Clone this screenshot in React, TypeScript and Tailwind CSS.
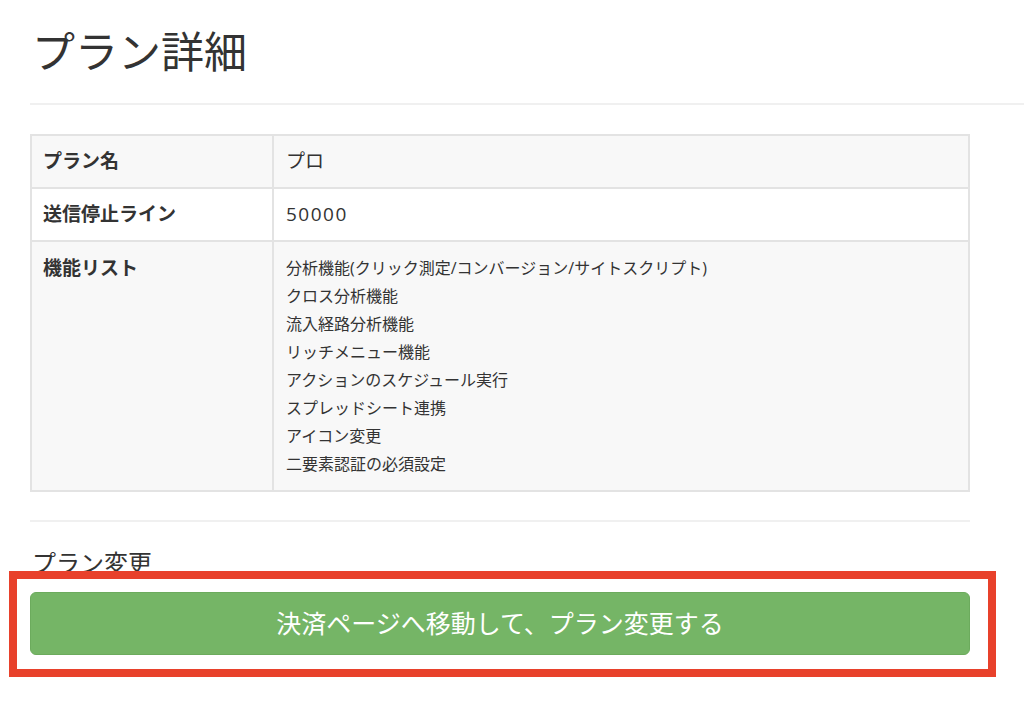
import React from 'react'

const features = [
  '分析機能(クリック測定/コンバージョン/サイトスクリプト)',
  'クロス分析機能',
  '流入経路分析機能',
  'リッチメニュー機能',
  'アクションのスケジュール実行',
  'スプレッドシート連携',
  'アイコン変更',
  '二要素認証の必須設定',
]

export default function App() {
  return (
    <div className="min-h-[712px] bg-white pl-[30px] text-[#333] font-['Open_Sans','Noto_Sans_CJK_JP',sans-serif]">
      {/* Header */}
      <div className="border-b-2 border-[#f0f0f0] pt-[24px] pb-[23px]">
        <h1 className="pl-[2px] text-[43px] leading-[56px] font-normal">プラン詳細</h1>
      </div>

      <div className="w-[940px]">
        {/* Plan table */}
        <div className="mt-[29px] border-2 border-[#e3e3e3]">
          <div className="flex bg-[#f8f8f8]">
            <div className="w-[242px] h-[51px] flex items-center px-[11px] text-[19px] font-bold border-r-2 border-[#e3e3e3]">
              プラン名
            </div>
            <div className="flex-1 h-[51px] flex items-center px-[12px] text-[19px]">プロ</div>
          </div>
          <div className="flex bg-white border-t-2 border-[#e3e3e3]">
            <div className="w-[242px] h-[51px] flex items-center px-[11px] text-[19px] font-bold border-r-2 border-[#e3e3e3]">
              送信停止ライン
            </div>
            <div className="flex-1 h-[51px] flex items-center px-[12px] text-[19px] tracking-[1.5px]">50000</div>
          </div>
          <div className="flex bg-[#f8f8f8] border-t-2 border-[#e3e3e3]">
            <div className="w-[242px] pt-[14px] px-[11px] text-[19px] leading-[24px] font-bold border-r-2 border-[#e3e3e3]">
              機能リスト
            </div>
            <ul className="flex-1 pt-[12px] pb-[12px] px-[12px] text-[16px] leading-[28px]">
              {features.map((f) => (
                <li key={f}>{f}</li>
              ))}
            </ul>
          </div>
        </div>

        {/* Plan change */}
        <div className="mt-[28px] border-t-2 border-[#f0f0f0]">
          <h2 className="mt-[25px] pl-[2px] text-[24px] leading-[32px] font-normal">プラン変更</h2>
          <div className="relative mt-[13px]">
            <button className="w-full h-[63px] rounded-[6px] bg-[#75b566] border border-[#6cab5d] text-white text-[25px]">
              決済ページへ移動して、プラン変更する
            </button>
            <div className="absolute -left-[21px] -top-[21px] -right-[26px] -bottom-[22px] border-[8px] border-[#e8412b] pointer-events-none" />
          </div>
        </div>
      </div>
    </div>
  )
}
